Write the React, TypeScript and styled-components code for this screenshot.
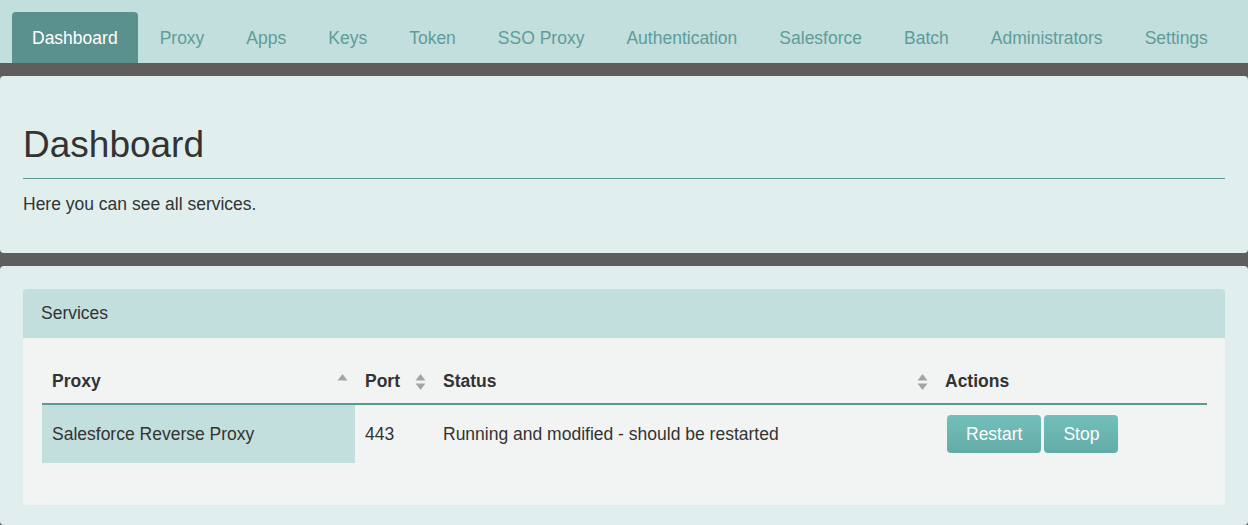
import React, { FC } from 'react';
import styled, { createGlobalStyle } from 'styled-components';

const GlobalStyle = createGlobalStyle`
  body {
    margin: 0;
    background: #5e5e5e;
    font-family: 'Liberation Sans', Arial, sans-serif;
    color: #333;
  }
`;

const Nav = styled.nav`
  display: flex;
  gap: 2px;
  height: 63px;
  padding: 12px 12px 0;
  box-sizing: border-box;
  background: #c2dedd;
`;

const Tab = styled.a<{ active?: boolean }>`
  display: flex;
  align-items: center;
  padding: 2px 20px 0;
  border-radius: 4px 4px 0 0;
  font-size: 17.5px;
  text-decoration: none;
  color: ${({ active }) => (active ? '#fff' : '#5e9d99')};
  background: ${({ active }) => (active ? '#5a918e' : 'transparent')};
`;

const Panel = styled.section<{ pad: string }>`
  margin-top: 13px;
  padding: ${({ pad }) => pad};
  background: #e0efee;
  border-radius: 4px;
`;

const Title = styled.h1`
  margin: 0;
  padding-bottom: 12px;
  border-bottom: 1px solid #5a9a96;
  font-size: 37px;
  line-height: 1.1;
  font-weight: normal;
  color: #333;
`;

const Lead = styled.p`
  margin: 13px 0 0;
  font-size: 17.5px;
  line-height: 24.5px;
`;

const Card = styled.div`
  border-radius: 4px;
  overflow: hidden;
`;

const CardHeader = styled.div`
  display: flex;
  align-items: center;
  height: 49px;
  padding: 0 18px;
  background: #c2dedd;
  font-size: 17.5px;
`;

const CardBody = styled.div`
  padding: 22px 18px 42px 19px;
  background: #f2f4f3;
`;

const Table = styled.table`
  width: 100%;
  table-layout: fixed;
  border-collapse: collapse;
  font-size: 17.5px;
`;

const Th = styled.th`
  height: 43px;
  padding: 0 7px 0 10px;
  text-align: left;
  font-weight: bold;
  border-bottom: 2px solid #5a9a96;
`;

const ThInner = styled.div`
  display: flex;
  align-items: center;
  justify-content: space-between;
`;

const Td = styled.td<{ sorted?: boolean }>`
  height: 58px;
  padding: 0 10px;
  background: ${({ sorted }) => (sorted ? '#c2dedd' : 'transparent')};
`;

const ActionsCell = styled(Td)`
  padding-left: 12px;
`;

const Actions = styled.div`
  display: flex;
  gap: 3px;
`;

const Button = styled.button`
  height: 38px;
  padding: 0 19px;
  border: none;
  border-radius: 4px;
  background: linear-gradient(#72c0bb, #64aba7);
  color: #fff;
  font-family: inherit;
  font-size: 17.5px;
`;

type TSort = 'asc' | 'both' | 'none';

const SortIcon: FC<{ mode: TSort }> = ({ mode }) => {
  if (mode === 'none') return null;
  return (
    <svg width='11' height='18' viewBox='0 0 11 18'>
      <path d='M5.5 1 L10.5 7.5 L0.5 7.5 Z' fill='#a4a4a4' />
      {mode === 'both' && <path d='M5.5 17 L10.5 10.5 L0.5 10.5 Z' fill='#a4a4a4' />}
    </svg>
  );
};

const tabs = ['Dashboard', 'Proxy', 'Apps', 'Keys', 'Token', 'SSO Proxy', 'Authentication', 'Salesforce', 'Batch', 'Administrators', 'Settings'];

const columns: { label: string; width: number; sort: TSort }[] = [
  { label: 'Proxy', width: 313, sort: 'asc' },
  { label: 'Port', width: 78, sort: 'both' },
  { label: 'Status', width: 502, sort: 'both' },
  { label: 'Actions', width: 272, sort: 'none' },
];

const App: FC = () => (
  <>
    <GlobalStyle />
    <Nav>
      {tabs.map((t) => (
        <Tab key={t} active={t === 'Dashboard'}>{t}</Tab>
      ))}
    </Nav>
    <Panel pad='49px 23px 37px'>
      <Title>Dashboard</Title>
      <Lead>Here you can see all services.</Lead>
    </Panel>
    <Panel pad='23px 23px 20px'>
      <Card>
        <CardHeader>Services</CardHeader>
        <CardBody>
          <Table>
            <colgroup>
              {columns.map((c) => <col key={c.label} style={{ width: c.width }} />)}
            </colgroup>
            <thead>
              <tr>
                {columns.map((c) => (
                  <Th key={c.label}>
                    <ThInner>
                      {c.label}
                      <SortIcon mode={c.sort} />
                    </ThInner>
                  </Th>
                ))}
              </tr>
            </thead>
            <tbody>
              <tr>
                <Td sorted>Salesforce Reverse Proxy</Td>
                <Td>443</Td>
                <Td>Running and modified - should be restarted</Td>
                <ActionsCell>
                  <Actions>
                    <Button>Restart</Button>
                    <Button>Stop</Button>
                  </Actions>
                </ActionsCell>
              </tr>
            </tbody>
          </Table>
        </CardBody>
      </Card>
    </Panel>
  </>
);

export default App;
